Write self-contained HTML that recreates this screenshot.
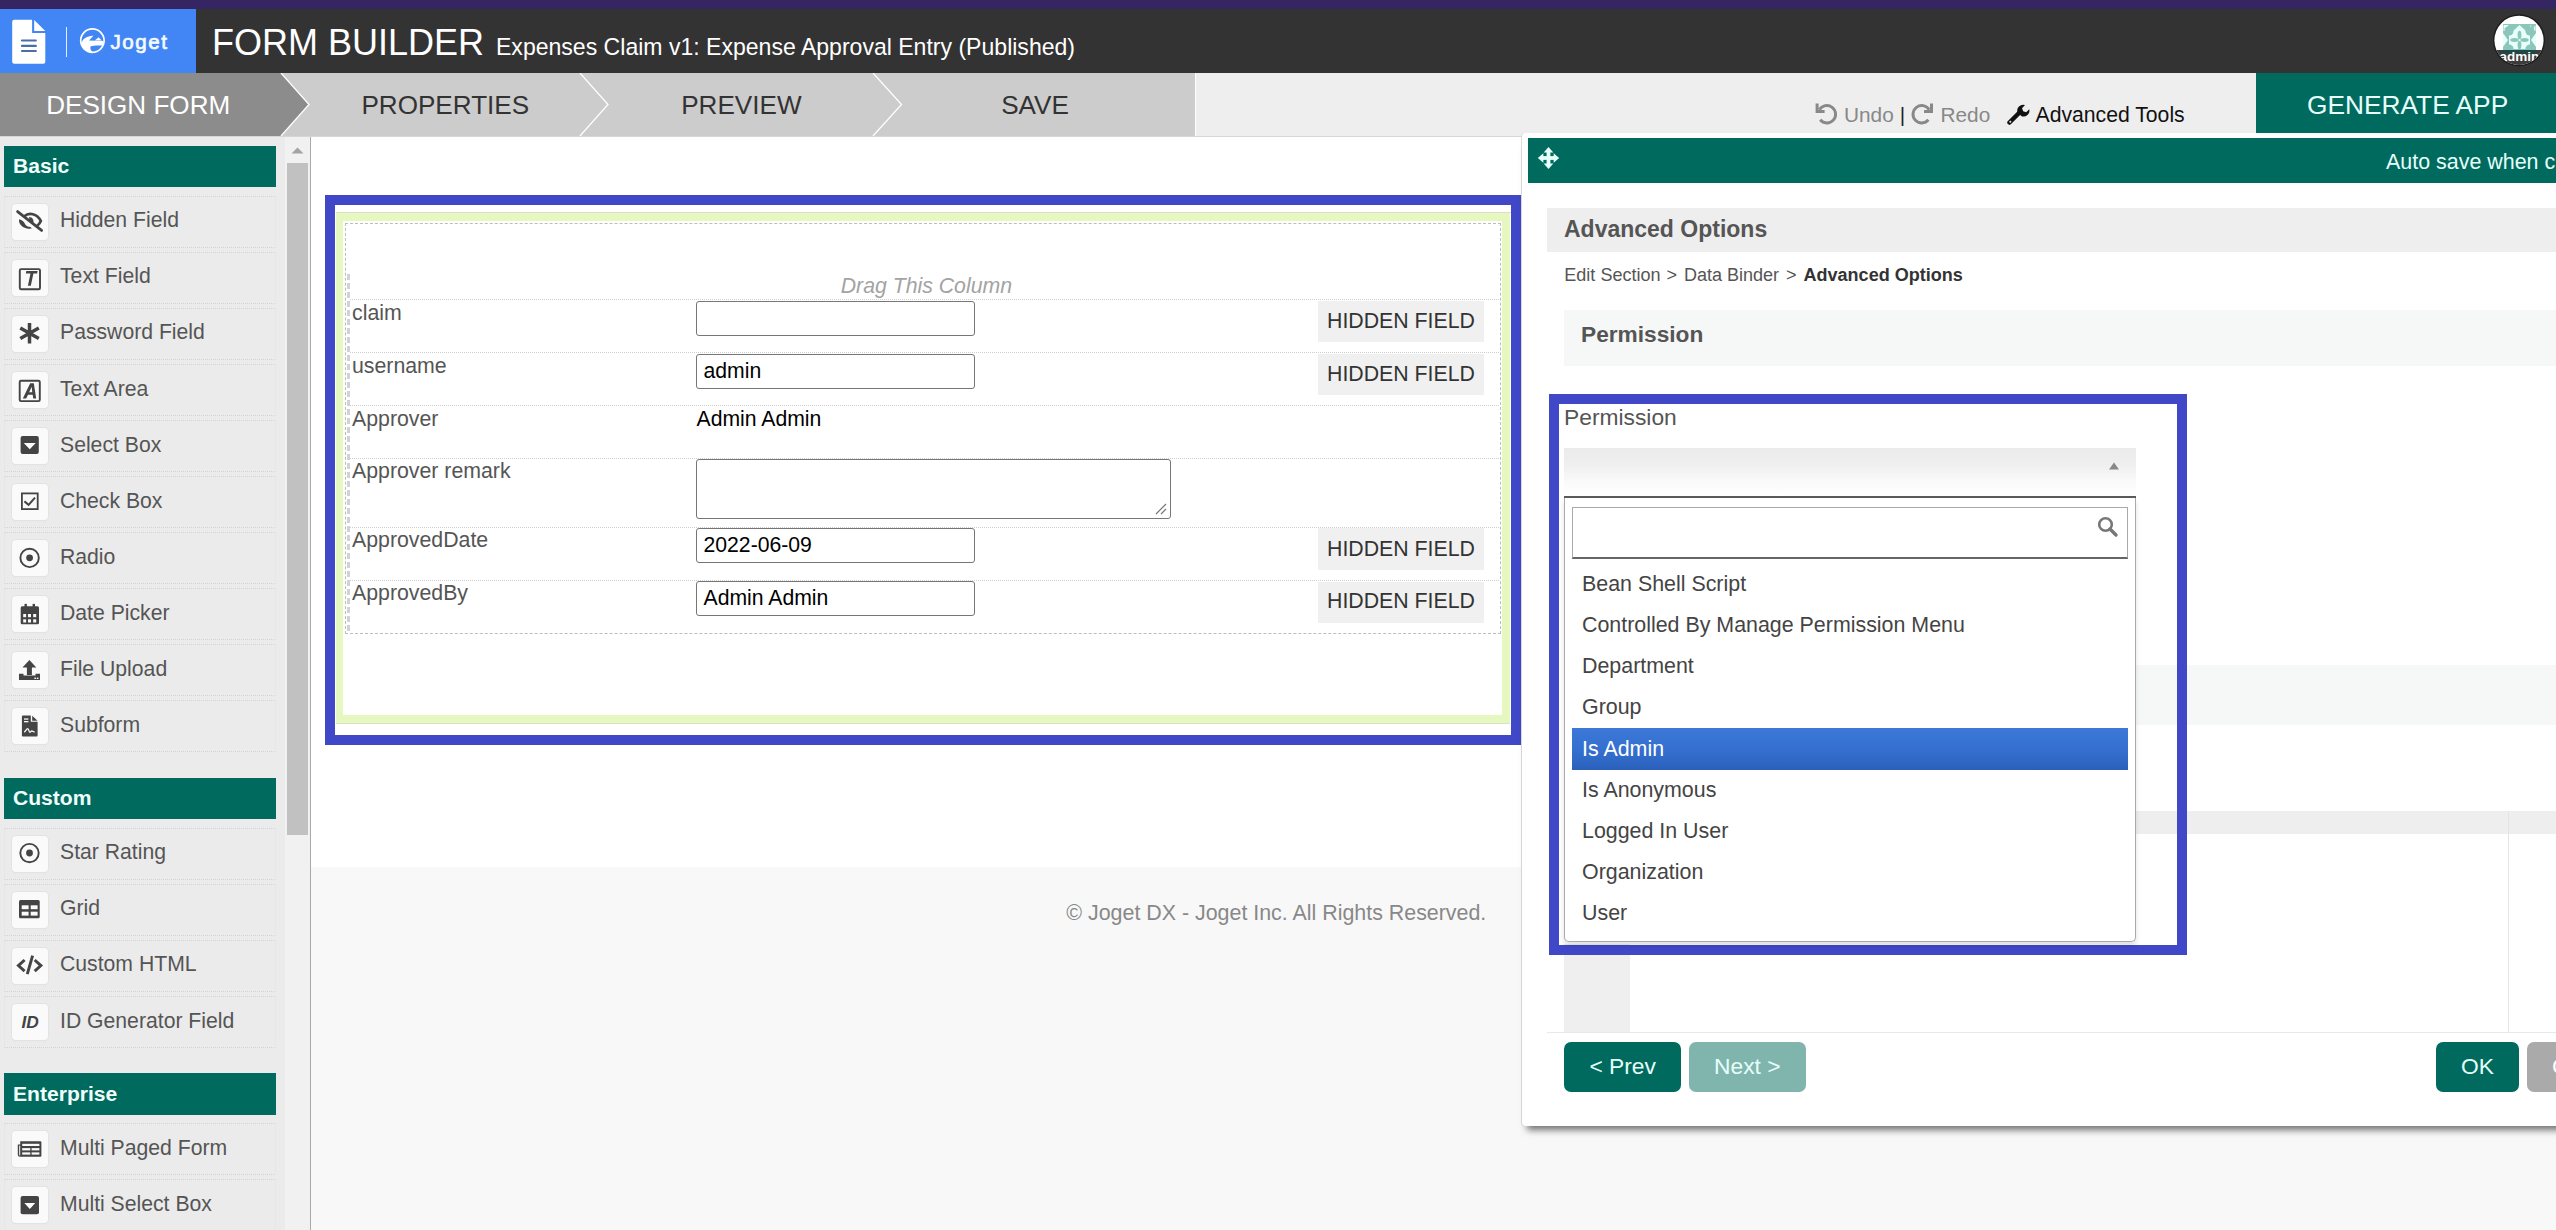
<!DOCTYPE html>
<html><head><meta charset="utf-8"><title>Form Builder</title>
<style>
html,body{margin:0;padding:0;width:2556px;height:1230px;overflow:hidden;background:#fff;}
body{position:relative;font-family:"Liberation Sans",sans-serif;}
body>div,body>svg{position:absolute;box-sizing:content-box;}
.t{line-height:0;white-space:nowrap;}
</style></head><body>
<div style="left:0px;top:0px;width:2556px;height:9px;background:#352563;"></div>
<div style="left:0px;top:9px;width:2556px;height:64px;background:#333333;"></div>
<div style="left:0px;top:9px;width:196px;height:64px;background:#4285f4;"></div>
<svg style="left:0;top:0" width="200" height="73" viewBox="0 0 200 73">
<path d="M14.2 19.7 H32.1 V33.1 H45.3 V61.7 a2 2 0 0 1 -2 2 H14.2 a2 2 0 0 1 -2 -2 V21.7 a2 2 0 0 1 2 -2z" fill="#fff"/>
<path d="M34.2 19.9 L45.3 31 H34.2z" fill="#fff"/>
<g stroke="#4a6ea8" stroke-width="2.2" stroke-linecap="round"><path d="M22 40.5 H35.8 M22 45.9 H35.8 M22 51 H35.8"/></g>
<rect x="66" y="27" width="1" height="30" fill="#fff" fill-opacity="0.85"/>
<circle cx="92.4" cy="40.6" r="11.7" fill="none" stroke="#fff" stroke-width="1.7"/>
<path d="M81.2 45 C81.3 41 84 38 88 36.8 C90 36.2 92 35.8 93.4 35.8 L89 40.4 L103.2 41 L103.2 45.6 C100 45.3 93 45.2 90.8 46.3 C89.8 47.8 90.4 50.6 93 52.4 C88 52.8 83 50 81.2 45z" fill="#fff"/>
<path d="M94.8 40.4 L98.6 37.2 L101.8 40.4z" fill="#fff"/>
</svg>
<div class="t" style="left:110.4px;top:42.00px;font-size:20.6px;color:#f4fbff;letter-spacing:1.55px;-webkit-text-stroke:0.7px #f4fbff">Joget</div>
<div class="t" style="left:212px;top:43.00px;font-size:36px;color:#fff;">FORM BUILDER</div>
<div class="t" style="left:496px;top:47.00px;font-size:23.05px;color:#fff;">Expenses Claim v1: Expense Approval Entry (Published)</div>
<svg style="left:2480px;top:0" width="76" height="73" viewBox="2480 0 76 73">
<defs><clipPath id="cc"><circle cx="2519" cy="40.3" r="24.6"/></clipPath></defs>
<circle cx="2519" cy="40.3" r="26" fill="#1c1c1c"/>
<g clip-path="url(#cc)">
<rect x="2490" y="10" width="60" height="60" fill="#fff"/>
<rect x="2503" y="24" width="33" height="26" fill="#8cc5bb"/>
<g fill="#e6fffb">
<path d="M2509 31 H2530 V49 H2509z"/>
<path d="M2503 33 L2508 40 L2503 47z M2536 33 L2531 40 L2536 47z"/>
<path d="M2503.5 25 H2509 L2504 29 H2509 V31 H2503.5z M2513 31 L2519.5 25 L2526 31z M2530 25 L2533 29 L2535.5 25 V31 H2530z"/>
</g>
<g fill="#8cc5bb">
<circle cx="2509" cy="31" r="4.6"/><circle cx="2530" cy="31" r="4.6"/><circle cx="2509" cy="49" r="4.6"/><circle cx="2530" cy="49" r="4.6"/>
<ellipse cx="2519.5" cy="35" rx="1.9" ry="4.2"/><ellipse cx="2519.5" cy="45" rx="1.9" ry="4.2"/>
<ellipse cx="2514.5" cy="40" rx="4.2" ry="1.9"/><ellipse cx="2524.5" cy="40" rx="4.2" ry="1.9"/>
</g>
<rect x="2490" y="50" width="60" height="20" fill="#3c3c3c"/>
<rect x="2503" y="50" width="33" height="4" fill="#1d4843"/>
<text x="2519.5" y="61.3" font-family="Liberation Sans" font-size="13.5" font-weight="700" fill="#fff" text-anchor="middle">admin</text>
</g>
</svg>
<div style="left:0px;top:73px;width:2556px;height:63px;background:#eeeeee;"></div>
<div style="left:281px;top:73px;width:914px;height:63px;background:#cccccc;"></div>
<div style="left:1195px;top:73px;width:1px;height:63px;background:#ffffff;"></div>
<svg style="left:0;top:73px" width="1200" height="63" viewBox="0 0 1200 63">
<polygon points="0,0 281,0 309,31.5 281,63 0,63" fill="#8c8c8c"/>
<polyline points="281,0 309,31.5 281,63" fill="none" stroke="#fff" stroke-width="1.3"/>
<polyline points="580,0 608,31.5 580,63" fill="none" stroke="#fff" stroke-width="1.3"/>
<polyline points="873,0 901.5,31.5 873,63" fill="none" stroke="#fff" stroke-width="1.3"/>
</svg>
<div style="left:0px;top:136px;width:2556px;height:1px;background:#d6d6d6;"></div>
<div style="left:0px;top:137px;width:2556px;height:1px;background:#e6e6e6;"></div>
<div class="t" style="left:-1.8000000000000114px;width:280px;top:105.00px;font-size:26.1px;color:#fff;text-align:center;">DESIGN FORM</div>
<div class="t" style="left:305.3px;width:280px;top:105.00px;font-size:26.1px;color:#333;text-align:center;">PROPERTIES</div>
<div class="t" style="left:601.4px;width:280px;top:105.00px;font-size:26.1px;color:#333;text-align:center;">PREVIEW</div>
<div class="t" style="left:895.0px;width:280px;top:105.00px;font-size:26.1px;color:#333;text-align:center;">SAVE</div>
<svg style="left:1812px;top:100px" width="28" height="28" viewBox="0 0 28 28">
<path d="M7.4 9.8 A8.7 8.7 0 1 1 8.2 19.8" fill="none" stroke="#888" stroke-width="2.9"/>
<path d="M3.6 3.6 H6.6 V10 H12.6 V12.9 H3.6z" fill="#888"/>
</svg>
<div class="t" style="left:1844px;top:115.00px;font-size:20.8px;color:#888;">Undo</div>
<div class="t" style="left:1899.8px;top:115.00px;font-size:20.8px;color:#222;">|</div>
<svg style="left:1908px;top:100px" width="28" height="28" viewBox="0 0 28 28">
<path d="M21.2 9.8 A8.7 8.7 0 1 0 20.4 19.8" fill="none" stroke="#888" stroke-width="2.9"/>
<path d="M25 3.6 H22 V10 H16 V12.9 H25z" fill="#888"/>
</svg>
<div class="t" style="left:1940.5px;top:115.00px;font-size:20.8px;color:#888;">Redo</div>
<svg style="left:2007px;top:103px" width="24" height="23" viewBox="0 0 24 23">
<path d="M2.5 19.5 L12 10" stroke="#111" stroke-width="4.5" stroke-linecap="round"/>
<path d="M10.5 9.5 A6 6 0 0 1 18 2 L15 5.2 L16.2 8.2 L19.2 9.2 L22.3 6.2 A6 6 0 0 1 14.6 13.2z" fill="#111"/>
<circle cx="3.3" cy="18.7" r="1" fill="#eee"/>
</svg>
<div class="t" style="left:2035.5px;top:115.00px;font-size:21.2px;color:#111;">Advanced Tools</div>
<div style="left:2256px;top:73px;width:300px;height:60px;background:#006a5e;"></div>
<div class="t" style="left:2307px;top:105.00px;font-size:26.3px;color:#e6fffa;">GENERATE APP</div>
<div style="left:0px;top:137px;width:310px;height:1093px;background:#ebebeb;"></div>
<div style="left:310px;top:137px;width:1px;height:1093px;background:#a9a9a9;"></div>
<div style="left:285px;top:137px;width:25px;height:1093px;background:#f1f1f1;"></div>
<div style="left:287px;top:163px;width:21px;height:672px;background:#c1c1c1;"></div>
<svg style="left:289px;top:143px" width="17" height="13" viewBox="0 0 17 13"><polygon points="2.5,10.5 14.5,10.5 8.5,4.5" fill="#a3a3a3"/></svg>
<div style="left:4px;top:146px;width:272px;height:40.5px;background:#006a5e;"></div>
<div class="t" style="left:13px;top:166.00px;font-size:21.1px;color:#f0fffc;font-weight:700;">Basic</div>
<div style="left:4px;top:196px;width:270px;height:50px;border:1px dotted #d3d3d3;border-left-color:#e2e2e2;border-right-color:#e2e2e2"></div>
<div style="left:12px;top:204px;width:36px;height:36px;border-radius:4px;background:#fafafa;box-shadow:0 0 0 1px #e3e3e3, 0 1px 1px #dcdcdc"></div>
<svg style="left:12px;top:204px" width="36" height="36" viewBox="0 0 36 36"><path d="M5.6 7.6 L29.6 26.4" stroke="#444" stroke-width="2.8" stroke-linecap="round"/><path d="M12.2 12.2 C17 8.2 25 9.4 28.8 16.9 C28 19 26.6 20.6 25.2 21.8" fill="none" stroke="#444" stroke-width="2.7"/><path d="M17 13 C20.4 13 22.2 16 21.2 19.2 L17.4 16.4z" fill="#444"/><path d="M7.2 15.2 C6.4 18 8.2 21.4 12 23.4 C14.6 24.7 17.4 25 20 24.6 L18.4 23 C16.2 23 13.9 21.9 12.9 19.8 C11.9 17.7 10.2 16 7.2 15.2z" fill="#444"/></svg>
<div class="t" style="left:60px;top:220.00px;font-size:21.2px;color:#555;">Hidden Field</div>
<div style="left:4px;top:252px;width:270px;height:50px;border:1px dotted #d3d3d3;border-left-color:#e2e2e2;border-right-color:#e2e2e2"></div>
<div style="left:12px;top:260px;width:36px;height:36px;border-radius:4px;background:#fafafa;box-shadow:0 0 0 1px #e3e3e3, 0 1px 1px #dcdcdc"></div>
<svg style="left:12px;top:260px" width="36" height="36" viewBox="0 0 36 36"><rect x="7.8" y="9.1" width="20.2" height="20.1" rx="1.3" fill="none" stroke="#444" stroke-width="1.9"/><path d="M14.3 11 H25.6 L25.1 13.5 H21.4 L18.8 25.7 H15.9 L18.5 13.5 H13.8z" fill="#444"/></svg>
<div class="t" style="left:60px;top:276.00px;font-size:21.2px;color:#555;">Text Field</div>
<div style="left:4px;top:308px;width:270px;height:50px;border:1px dotted #d3d3d3;border-left-color:#e2e2e2;border-right-color:#e2e2e2"></div>
<div style="left:12px;top:316px;width:36px;height:36px;border-radius:4px;background:#fafafa;box-shadow:0 0 0 1px #e3e3e3, 0 1px 1px #dcdcdc"></div>
<svg style="left:12px;top:316px" width="36" height="36" viewBox="0 0 36 36"><path d="M17.5 7 V27.4 M8.3 12 L26.8 22.5 M26.8 12 L8.3 22.5" stroke="#444" stroke-width="3.5"/></svg>
<div class="t" style="left:60px;top:332.00px;font-size:21.2px;color:#555;">Password Field</div>
<div style="left:4px;top:364px;width:270px;height:50px;border:1px dotted #d3d3d3;border-left-color:#e2e2e2;border-right-color:#e2e2e2"></div>
<div style="left:12px;top:372px;width:36px;height:36px;border-radius:4px;background:#fafafa;box-shadow:0 0 0 1px #e3e3e3, 0 1px 1px #dcdcdc"></div>
<svg style="left:12px;top:372px" width="36" height="36" viewBox="0 0 36 36"><rect x="7.7" y="8.8" width="20.1" height="20.3" rx="1.3" fill="none" stroke="#444" stroke-width="1.9"/><path d="M10.8 26.5 L18.2 11.2 H21.8 L24.2 26.5 H21.2 L20.7 22.8 H16 L14.2 26.5z M17.2 20.3 H20.3 L19.6 14.8z" fill="#444"/></svg>
<div class="t" style="left:60px;top:389.00px;font-size:21.2px;color:#555;">Text Area</div>
<div style="left:4px;top:420px;width:270px;height:50px;border:1px dotted #d3d3d3;border-left-color:#e2e2e2;border-right-color:#e2e2e2"></div>
<div style="left:12px;top:428px;width:36px;height:36px;border-radius:4px;background:#fafafa;box-shadow:0 0 0 1px #e3e3e3, 0 1px 1px #dcdcdc"></div>
<svg style="left:12px;top:428px" width="36" height="36" viewBox="0 0 36 36"><rect x="8.6" y="8.1" width="18.2" height="17.9" rx="2" fill="#444"/><polygon points="11.8,15 23.7,15 17.75,21.3" fill="#fff"/></svg>
<div class="t" style="left:60px;top:445.00px;font-size:21.2px;color:#555;">Select Box</div>
<div style="left:4px;top:476px;width:270px;height:50px;border:1px dotted #d3d3d3;border-left-color:#e2e2e2;border-right-color:#e2e2e2"></div>
<div style="left:12px;top:484px;width:36px;height:36px;border-radius:4px;background:#fafafa;box-shadow:0 0 0 1px #e3e3e3, 0 1px 1px #dcdcdc"></div>
<svg style="left:12px;top:484px" width="36" height="36" viewBox="0 0 36 36"><rect x="9.9" y="9.4" width="15.8" height="15.7" fill="none" stroke="#444" stroke-width="1.8"/><path d="M12.4 17.4 L16.6 20.8 L23 13.6" fill="none" stroke="#444" stroke-width="2"/></svg>
<div class="t" style="left:60px;top:501.00px;font-size:21.2px;color:#555;">Check Box</div>
<div style="left:4px;top:532px;width:270px;height:50px;border:1px dotted #d3d3d3;border-left-color:#e2e2e2;border-right-color:#e2e2e2"></div>
<div style="left:12px;top:540px;width:36px;height:36px;border-radius:4px;background:#fafafa;box-shadow:0 0 0 1px #e3e3e3, 0 1px 1px #dcdcdc"></div>
<svg style="left:12px;top:540px" width="36" height="36" viewBox="0 0 36 36"><circle cx="17.6" cy="17.9" r="9.2" fill="none" stroke="#444" stroke-width="1.9"/><circle cx="17.6" cy="17.8" r="3.4" fill="#444"/></svg>
<div class="t" style="left:60px;top:557.00px;font-size:21.2px;color:#555;">Radio</div>
<div style="left:4px;top:588px;width:270px;height:50px;border:1px dotted #d3d3d3;border-left-color:#e2e2e2;border-right-color:#e2e2e2"></div>
<div style="left:12px;top:596px;width:36px;height:36px;border-radius:4px;background:#fafafa;box-shadow:0 0 0 1px #e3e3e3, 0 1px 1px #dcdcdc"></div>
<svg style="left:12px;top:596px" width="36" height="36" viewBox="0 0 36 36"><rect x="8.7" y="10.2" width="18.3" height="18.1" rx="1.5" fill="#444"/><rect x="12.5" y="7.9" width="2.4" height="3.5" fill="#444"/><rect x="20.6" y="7.9" width="2.4" height="3.5" fill="#444"/><g fill="#fafafa"><rect x="11.2" y="18" width="2.9" height="3.2"/><rect x="16" y="18" width="3" height="3.2"/><rect x="21.2" y="18" width="3" height="3.2"/><rect x="11.2" y="23.3" width="2.9" height="3.2"/><rect x="16" y="23.3" width="3" height="3.2"/><rect x="21.2" y="23.3" width="3" height="3.2"/></g></svg>
<div class="t" style="left:60px;top:613.00px;font-size:21.2px;color:#555;">Date Picker</div>
<div style="left:4px;top:644px;width:270px;height:50px;border:1px dotted #d3d3d3;border-left-color:#e2e2e2;border-right-color:#e2e2e2"></div>
<div style="left:12px;top:652px;width:36px;height:36px;border-radius:4px;background:#fafafa;box-shadow:0 0 0 1px #e3e3e3, 0 1px 1px #dcdcdc"></div>
<svg style="left:12px;top:652px" width="36" height="36" viewBox="0 0 36 36"><path d="M17.4 8 L24.3 15.6 H19.9 V23 H14.9 V15.6 H10.5z" fill="#444"/><path d="M7 21.8 H11.5 V23.6 H23.5 V21.8 H28 V28 H7z" fill="#444"/><g fill="#fafafa"><rect x="22.4" y="25.6" width="1.6" height="1.4"/><rect x="24.8" y="25.6" width="1.6" height="1.4"/></g></svg>
<div class="t" style="left:60px;top:669.00px;font-size:21.2px;color:#555;">File Upload</div>
<div style="left:4px;top:700px;width:270px;height:50px;border:1px dotted #d3d3d3;border-left-color:#e2e2e2;border-right-color:#e2e2e2"></div>
<div style="left:12px;top:708px;width:36px;height:36px;border-radius:4px;background:#fafafa;box-shadow:0 0 0 1px #e3e3e3, 0 1px 1px #dcdcdc"></div>
<svg style="left:12px;top:708px" width="36" height="36" viewBox="0 0 36 36"><path d="M10.9 7.6 H18.8 V13.7 H25.6 V27.4 a1 1 0 0 1 -1 1 H10.9 a1 1 0 0 1 -1 -1 V8.6 a1 1 0 0 1 1 -1z" fill="#444"/><path d="M20.2 7.8 L25.6 12.7 H20.2z" fill="#444"/><g fill="#fafafa"><rect x="12" y="10.4" width="4.4" height="1.3"/><rect x="12" y="13" width="4.4" height="1.3"/></g><path d="M12.3 24.3 C13.5 23.5 14.6 20.6 15.7 20.6 C16.8 20.6 17 24.3 17.8 24.3 C18.6 24.3 19 23 19.8 23 C20.8 23 21.5 24 22.6 24" fill="none" stroke="#fafafa" stroke-width="1.3"/></svg>
<div class="t" style="left:60px;top:725.00px;font-size:21.2px;color:#555;">Subform</div>
<div style="left:4px;top:778px;width:272px;height:40.5px;background:#006a5e;"></div>
<div class="t" style="left:13px;top:798.00px;font-size:21.1px;color:#f0fffc;font-weight:700;">Custom</div>
<div style="left:4px;top:828px;width:270px;height:50px;border:1px dotted #d3d3d3;border-left-color:#e2e2e2;border-right-color:#e2e2e2"></div>
<div style="left:12px;top:836px;width:36px;height:36px;border-radius:4px;background:#fafafa;box-shadow:0 0 0 1px #e3e3e3, 0 1px 1px #dcdcdc"></div>
<svg style="left:12px;top:836px" width="36" height="36" viewBox="0 0 36 36"><circle cx="17.5" cy="17.1" r="9.2" fill="none" stroke="#444" stroke-width="1.9"/><circle cx="17.5" cy="17" r="3.4" fill="#444"/></svg>
<div class="t" style="left:60px;top:852.00px;font-size:21.2px;color:#555;">Star Rating</div>
<div style="left:4px;top:884px;width:270px;height:50px;border:1px dotted #d3d3d3;border-left-color:#e2e2e2;border-right-color:#e2e2e2"></div>
<div style="left:12px;top:892px;width:36px;height:36px;border-radius:4px;background:#fafafa;box-shadow:0 0 0 1px #e3e3e3, 0 1px 1px #dcdcdc"></div>
<svg style="left:12px;top:892px" width="36" height="36" viewBox="0 0 36 36"><rect x="7" y="8.1" width="20.7" height="18.1" rx="1.5" fill="#444"/><g fill="#fafafa"><rect x="9.7" y="13.3" width="6.9" height="3.9"/><rect x="18.7" y="13.3" width="6.9" height="3.9"/><rect x="9.7" y="19.7" width="6.9" height="3.9"/><rect x="18.7" y="19.7" width="6.9" height="3.9"/></g></svg>
<div class="t" style="left:60px;top:908.00px;font-size:21.2px;color:#555;">Grid</div>
<div style="left:4px;top:940px;width:270px;height:50px;border:1px dotted #d3d3d3;border-left-color:#e2e2e2;border-right-color:#e2e2e2"></div>
<div style="left:12px;top:948px;width:36px;height:36px;border-radius:4px;background:#fafafa;box-shadow:0 0 0 1px #e3e3e3, 0 1px 1px #dcdcdc"></div>
<svg style="left:12px;top:948px" width="36" height="36" viewBox="0 0 36 36"><path d="M12.6 12 L6.4 17.6 L12.6 23.2 M22.7 12 L28.9 17.6 L22.7 23.2" fill="none" stroke="#444" stroke-width="2.9"/><path d="M20.6 7.6 L15.3 26.2" stroke="#444" stroke-width="2.9"/></svg>
<div class="t" style="left:60px;top:964.00px;font-size:21.2px;color:#555;">Custom HTML</div>
<div style="left:4px;top:996px;width:270px;height:50px;border:1px dotted #d3d3d3;border-left-color:#e2e2e2;border-right-color:#e2e2e2"></div>
<div style="left:12px;top:1004px;width:36px;height:36px;border-radius:4px;background:#fafafa;box-shadow:0 0 0 1px #e3e3e3, 0 1px 1px #dcdcdc"></div>
<svg style="left:12px;top:1004px" width="36" height="36" viewBox="0 0 36 36"><text x="18.2" y="23.7" font-family="Liberation Sans" font-size="17.3" font-weight="700" font-style="italic" fill="#444" text-anchor="middle">ID</text></svg>
<div class="t" style="left:60px;top:1021.00px;font-size:21.2px;color:#555;">ID Generator Field</div>
<div style="left:4px;top:1073px;width:272px;height:42px;background:#006a5e;"></div>
<div class="t" style="left:13px;top:1094.00px;font-size:21.1px;color:#f0fffc;font-weight:700;">Enterprise</div>
<div style="left:4px;top:1123px;width:270px;height:50px;border:1px dotted #d3d3d3;border-left-color:#e2e2e2;border-right-color:#e2e2e2"></div>
<div style="left:12px;top:1131px;width:36px;height:36px;border-radius:4px;background:#fafafa;box-shadow:0 0 0 1px #e3e3e3, 0 1px 1px #dcdcdc"></div>
<svg style="left:12px;top:1131px" width="36" height="36" viewBox="0 0 36 36"><path d="M8.2 10.2 H28.4 a1 1 0 0 1 1 1 V24.7 a1 1 0 0 1 -1 1 H7.8 a2 2 0 0 1 -2 -2 V13.4 H8.2z" fill="#444"/><g fill="#fafafa"><rect x="7.2" y="14.6" width="1" height="9.8"/><rect x="10.2" y="12.8" width="17.2" height="2.2"/><rect x="10.2" y="17.1" width="8.1" height="2.3"/><rect x="19.6" y="17.1" width="7.8" height="2.3"/><rect x="10.2" y="21.4" width="8.1" height="2.2"/><rect x="19.6" y="21.4" width="7.8" height="2.2"/></g></svg>
<div class="t" style="left:60px;top:1148.00px;font-size:21.2px;color:#555;">Multi Paged Form</div>
<div style="left:4px;top:1179px;width:270px;height:50px;border:1px dotted #d3d3d3;border-left-color:#e2e2e2;border-right-color:#e2e2e2"></div>
<div style="left:12px;top:1187px;width:36px;height:36px;border-radius:4px;background:#fafafa;box-shadow:0 0 0 1px #e3e3e3, 0 1px 1px #dcdcdc"></div>
<svg style="left:12px;top:1187px" width="36" height="36" viewBox="0 0 36 36"><rect x="8.6" y="9.1" width="18.4" height="18.1" rx="2" fill="#444"/><polygon points="12.4,16 23.2,16 17.8,22" fill="#fff"/></svg>
<div class="t" style="left:60px;top:1204.00px;font-size:21.2px;color:#555;">Multi Select Box</div>
<div style="left:311px;top:137px;width:2245px;height:730px;background:#ffffff;"></div>
<div style="left:311px;top:867px;width:2245px;height:363px;background:#f8f8f8;"></div>
<div style="left:325px;top:195px;width:1176px;height:530px;border:10px solid #4048c8"></div>
<div style="left:336px;top:212px;width:1175px;height:1px;background:#d9dfca;"></div>
<div style="left:336px;top:213px;width:1174px;height:8px;background:#e6f7c0;"></div>
<div style="left:336px;top:213px;width:7px;height:510px;background:#e6f7c0;"></div>
<div style="left:1502px;top:213px;width:8px;height:510px;background:#e6f7c0;"></div>
<div style="left:336px;top:715px;width:1174px;height:8px;background:#e6f7c0;"></div>
<div style="left:336px;top:723px;width:1174px;height:1px;background:#d9dfca;"></div>
<div style="left:345px;top:223px;width:1154px;height:409px;border:1px dashed #bdbdbd"></div>
<div style="left:347px;top:274px;width:3px;height:358px;background:repeating-linear-gradient(#d2d2d2 0px,#d2d2d2 6px,transparent 6px,transparent 9px)"></div>
<div class="t" style="left:726.4px;width:400px;top:286.00px;font-size:21.25px;color:#a3a3a3;font-style:italic;text-align:center;">Drag This Column</div>
<div style="left:350px;top:299px;width:1149px;height:0;border-top:1px dotted #cfcfcf"></div>
<div style="left:350px;top:352px;width:1149px;height:0;border-top:1px dotted #cfcfcf"></div>
<div style="left:350px;top:405px;width:1149px;height:0;border-top:1px dotted #cfcfcf"></div>
<div style="left:350px;top:458px;width:1149px;height:0;border-top:1px dotted #cfcfcf"></div>
<div style="left:350px;top:527px;width:1149px;height:0;border-top:1px dotted #cfcfcf"></div>
<div style="left:350px;top:580px;width:1149px;height:0;border-top:1px dotted #cfcfcf"></div>
<div class="t" style="left:352px;top:313.00px;font-size:21.3px;color:#555;">claim</div>
<div class="t" style="left:352px;top:366.00px;font-size:21.3px;color:#555;">username</div>
<div class="t" style="left:352px;top:419.00px;font-size:21.3px;color:#555;">Approver</div>
<div class="t" style="left:352px;top:471.00px;font-size:21.3px;color:#555;">Approver remark</div>
<div class="t" style="left:352px;top:540.00px;font-size:21.3px;color:#555;">ApprovedDate</div>
<div class="t" style="left:352px;top:593.00px;font-size:21.3px;color:#555;">ApprovedBy</div>
<div style="left:696px;top:301px;width:277px;height:33px;border:1px solid #767676;border-radius:3px;background:#fff"></div>
<div style="left:696px;top:354px;width:277px;height:33px;border:1px solid #767676;border-radius:3px;background:#fff"></div>
<div class="t" style="left:703.5px;top:371.00px;font-size:21.2px;color:#000;">admin</div>
<div class="t" style="left:696.5px;top:419.00px;font-size:21.2px;color:#000;">Admin Admin</div>
<div style="left:696px;top:459px;width:473px;height:58px;border:1px solid #767676;border-radius:3px;background:#fff"></div>
<svg style="left:1152px;top:500px" width="16" height="16" viewBox="0 0 16 16"><path d="M14 4 L4 14 M14 9 L9 14" stroke="#777" stroke-width="1.2"/></svg>
<div style="left:696px;top:528px;width:277px;height:33px;border:1px solid #767676;border-radius:3px;background:#fff"></div>
<div class="t" style="left:703.5px;top:545.00px;font-size:21.2px;color:#000;">2022-06-09</div>
<div style="left:696px;top:581px;width:277px;height:33px;border:1px solid #767676;border-radius:3px;background:#fff"></div>
<div class="t" style="left:703.5px;top:598.00px;font-size:21.2px;color:#000;">Admin Admin</div>
<div style="left:1318px;top:301px;width:166px;height:40.5px;background:#f0f0f0;"></div>
<div class="t" style="left:1327px;top:321.00px;font-size:21.3px;color:#333;">HIDDEN FIELD</div>
<div style="left:1318px;top:354px;width:166px;height:40.5px;background:#f0f0f0;"></div>
<div class="t" style="left:1327px;top:374.00px;font-size:21.3px;color:#333;">HIDDEN FIELD</div>
<div style="left:1318px;top:528px;width:166px;height:42px;background:#f0f0f0;"></div>
<div class="t" style="left:1327px;top:549.00px;font-size:21.3px;color:#333;">HIDDEN FIELD</div>
<div style="left:1318px;top:582px;width:166px;height:40.5px;background:#f0f0f0;"></div>
<div class="t" style="left:1327px;top:601.00px;font-size:21.3px;color:#333;">HIDDEN FIELD</div>
<div class="t" style="right:1069.7px;top:913.00px;font-size:21.4px;color:#888;text-align:right;">&copy; Joget DX - Joget Inc. All Rights Reserved.</div>
<div style="left:1522px;top:133px;width:1100px;height:992.5px;background:#fff;border-radius:4px;box-shadow:0 9px 7px -5px rgba(0,0,0,0.55), -1px 0 0 #dedede"></div>
<div style="left:1528px;top:138px;width:1028px;height:44.5px;background:#006a5e;"></div>
<svg style="left:1537px;top:146px" width="24" height="24" viewBox="0 0 24 24">
<g fill="#e6fffa"><polygon points="11.5,1 16.3,6.6 6.7,6.6"/><polygon points="11.5,23 16.3,17.4 6.7,17.4"/><polygon points="0.8,12 6.4,7.2 6.4,16.8"/><polygon points="22.2,12 16.6,7.2 16.6,16.8"/>
<rect x="9.6" y="6" width="3.8" height="12"/><rect x="6" y="10.1" width="11" height="3.8"/></g>
</svg>
<div class="t" style="left:2386px;top:162.00px;font-size:21.45px;color:#e6fffa;">Auto save when c</div>
<div style="left:1547px;top:208px;width:1009px;height:44px;background:#eeeeee;"></div>
<div class="t" style="left:1564px;top:229.00px;font-size:23px;color:#555;font-weight:700;">Advanced Options</div>
<div class="t" style="left:1564.3px;top:275.00px;font-size:18.05px;color:#555;">Edit Section</div>
<div class="t" style="left:1666.5px;top:275.00px;font-size:18.05px;color:#555;">&gt;</div>
<div class="t" style="left:1683.9px;top:275.00px;font-size:18.05px;color:#555;">Data Binder</div>
<div class="t" style="left:1786.1px;top:275.00px;font-size:18.05px;color:#555;">&gt;</div>
<div class="t" style="left:1803.5px;top:275.00px;font-size:18.05px;color:#333;font-weight:700;">Advanced Options</div>
<div style="left:1564px;top:310px;width:992px;height:56px;background:#f6f7f7;"></div>
<div class="t" style="left:1581px;top:334.00px;font-size:22.7px;color:#555;font-weight:700;">Permission</div>
<div style="left:1564px;top:665px;width:992px;height:60px;background:#f6f7f7;"></div>
<div style="left:1564px;top:811px;width:992px;height:23px;background:#eeeeee;"></div>
<div style="left:1564px;top:944px;width:66px;height:88px;background:#efefef;"></div>
<div style="left:2508px;top:811px;width:1px;height:221px;background:#e4e4e4;"></div>
<div style="left:1547px;top:1032px;width:1009px;height:1px;background:#e8e8e8;"></div>
<div style="left:1549px;top:394px;width:618px;height:541px;border:10px solid #4048c8"></div>
<div class="t" style="left:1564px;top:417.00px;font-size:22.8px;color:#555;">Permission</div>
<div style="left:1564px;top:448px;width:572px;height:48px;background:linear-gradient(#ebebeb 0%,#efefef 35%,#fafafa 70%,#fff 100%);border-bottom:2px solid #5a5a5a"></div>
<svg style="left:2106px;top:459px" width="16" height="12" viewBox="0 0 16 12"><polygon points="3,10.5 13,10.5 8,3.5" fill="#888"/></svg>
<div style="left:1564px;top:498px;width:570px;height:443px;background:#fff;border:1px solid #aaa;border-top:0;border-radius:0 0 5px 5px;box-shadow:0 4px 5px rgba(0,0,0,0.12)"></div>
<div style="left:1572px;top:507px;width:554px;height:49px;border:1px solid #aaa;border-bottom:2px solid #666;background:#fff"></div>
<svg style="left:2096px;top:515px" width="24" height="24" viewBox="0 0 24 24">
<circle cx="9.5" cy="9.5" r="6.3" fill="none" stroke="#777" stroke-width="2.6"/>
<path d="M14 14 L20 20" stroke="#777" stroke-width="3.4" stroke-linecap="round"/>
</svg>
<div class="t" style="left:1582px;top:584.00px;font-size:21.4px;color:#444;">Bean Shell Script</div>
<div class="t" style="left:1582px;top:625.00px;font-size:21.4px;color:#444;">Controlled By Manage Permission Menu</div>
<div class="t" style="left:1582px;top:666.00px;font-size:21.4px;color:#444;">Department</div>
<div class="t" style="left:1582px;top:707.00px;font-size:21.4px;color:#444;">Group</div>
<div style="left:1572px;top:728px;width:556px;height:42px;background:linear-gradient(#3b78d8 0%,#3570d0 50%,#2a60bb 100%)"></div>
<div class="t" style="left:1582px;top:749.00px;font-size:21.4px;color:#fff;">Is Admin</div>
<div class="t" style="left:1582px;top:790.00px;font-size:21.4px;color:#444;">Is Anonymous</div>
<div class="t" style="left:1582px;top:831.00px;font-size:21.4px;color:#444;">Logged In User</div>
<div class="t" style="left:1582px;top:872.00px;font-size:21.4px;color:#444;">Organization</div>
<div class="t" style="left:1582px;top:913.00px;font-size:21.4px;color:#444;">User</div>
<div style="left:1564px;top:1042px;width:117px;height:50px;background:#006a5e;border-radius:7px"></div>
<div class="t" style="left:1589.4px;top:1066.00px;font-size:22.8px;color:#e6fffa;">&lt; Prev</div>
<div style="left:1689px;top:1042px;width:117px;height:50px;background:#80b5ae;border-radius:7px"></div>
<div class="t" style="left:1714px;top:1066.00px;font-size:22.8px;color:#e6fffa;">Next &gt;</div>
<div style="left:2436px;top:1042px;width:83px;height:50px;background:#006a5e;border-radius:7px"></div>
<div class="t" style="left:2436.0px;width:83px;top:1066.00px;font-size:22.8px;color:#e6fffa;text-align:center;">OK</div>
<div style="left:2527px;top:1042px;width:90px;height:50px;background:#aaaaaa;border-radius:7px"></div>
<div class="t" style="left:2552px;top:1066.00px;font-size:22.8px;color:#fff;">Cancel</div>
</body></html>
